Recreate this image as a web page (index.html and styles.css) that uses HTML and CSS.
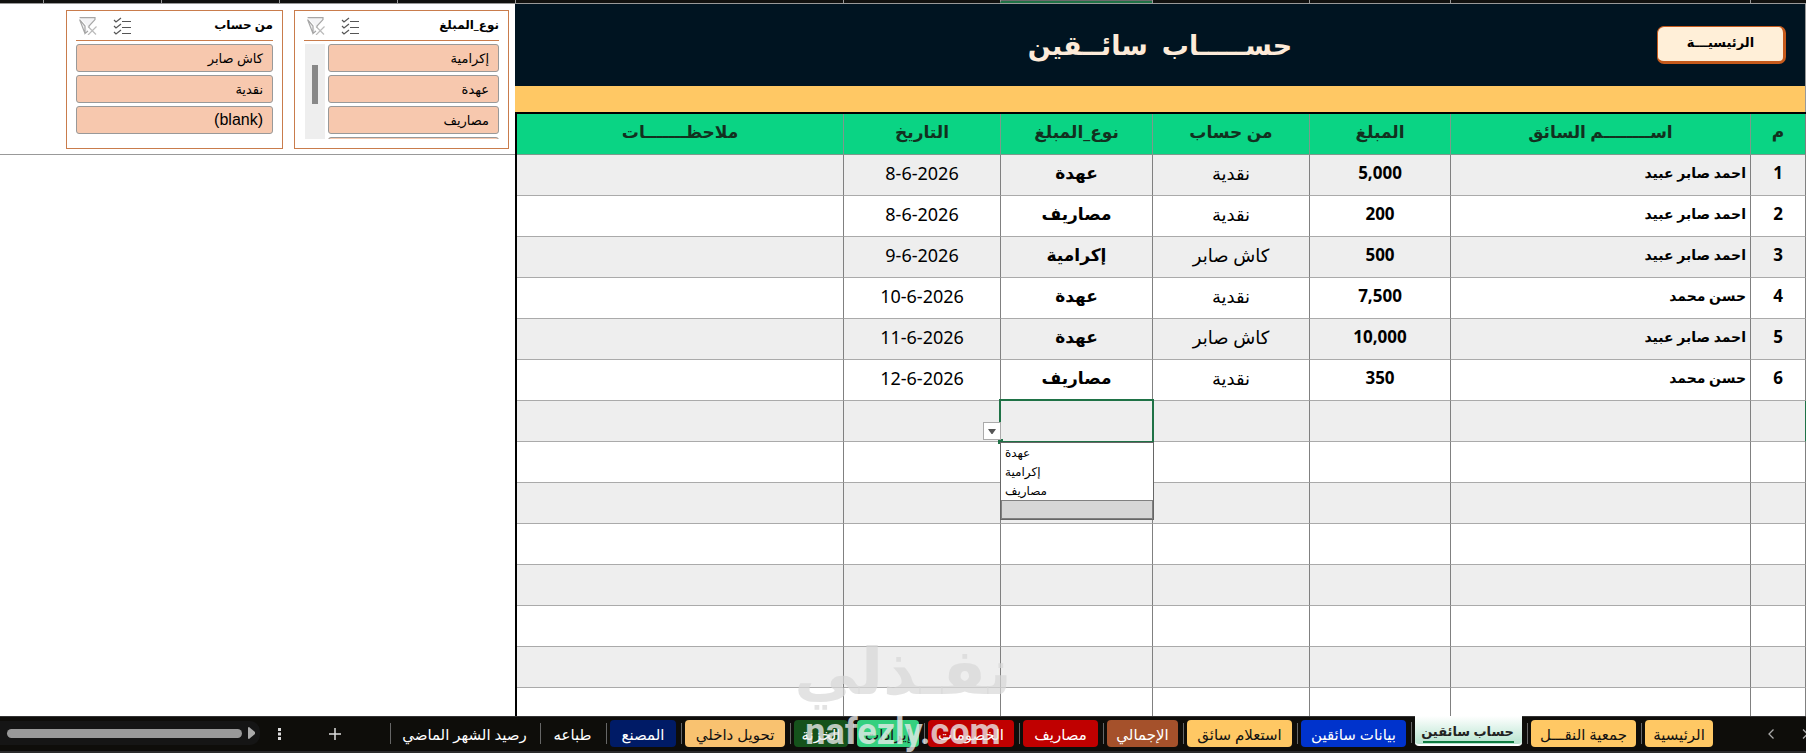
FILE: index.html
```html
<!DOCTYPE html>
<html lang="ar" dir="rtl">
<head>
<meta charset="utf-8">
<title>حساب سائقين</title>
<link rel="stylesheet" href="styles.css">
</head>
<body>
<div class="colhead" aria-hidden="true">
  <span class="c-no"></span><span class="c-name"></span><span class="c-amount"></span><span class="c-from"></span><span class="c-type current"></span><span class="c-date"></span><span class="c-notes"></span><span class="c-side"></span><span class="c-side"></span><span class="c-side"></span><span class="c-side"></span><span class="c-last"></span>
</div>
<main class="workspace">
  <section class="sheet">
    <header class="banner">
      <h1>حســـــاب&nbsp; سائــقين</h1>
      <button class="home" type="button">الرئيسيـــة</button>
    </header>
    <div class="stripe"></div>
    <table class="ledger">
      <colgroup><col class="c-no"><col class="c-name"><col class="c-amount"><col class="c-from"><col class="c-type"><col class="c-date"><col></colgroup>
      <thead>
        <tr><th>م</th><th>اســــــــم السائق</th><th>المبلغ</th><th>من حساب</th><th>نوع_المبلغ</th><th>التاريخ</th><th>ملاحظـــــــات</th></tr>
      </thead>
      <tbody>
        <tr><td>1</td><td class="name">احمد صابر عبيد</td><td>5,000</td><td>نقدية</td><td>عهدة</td><td>8-6-2026</td><td></td></tr>
        <tr><td>2</td><td class="name">احمد صابر عبيد</td><td>200</td><td>نقدية</td><td>مصاريف</td><td>8-6-2026</td><td></td></tr>
        <tr><td>3</td><td class="name">احمد صابر عبيد</td><td>500</td><td>كاش صابر</td><td>إكرامية</td><td>9-6-2026</td><td></td></tr>
        <tr><td>4</td><td class="name">حسن محمد</td><td>7,500</td><td>نقدية</td><td>عهدة</td><td>10-6-2026</td><td></td></tr>
        <tr><td>5</td><td class="name">احمد صابر عبيد</td><td>10,000</td><td>كاش صابر</td><td>عهدة</td><td>11-6-2026</td><td></td></tr>
        <tr><td>6</td><td class="name">حسن محمد</td><td>350</td><td>نقدية</td><td>مصاريف</td><td>12-6-2026</td><td></td></tr>
        <tr class="active-row"><td></td><td></td><td></td><td></td><td class="picker">
          <div class="cursor"></div>
          <button class="drop" type="button" aria-label="فتح القائمة"><svg viewBox="0 0 8 5" width="8" height="5"><path d="M0 0h8L4.500 5h-1z" fill="#555"/></svg></button>
          <ul class="options" role="listbox" aria-label="نوع المبلغ">
            <li role="option">عهدة</li><li role="option">إكرامية</li><li role="option">مصاريف</li><li role="option" class="hover" aria-selected="true"></li>
          </ul>
        </td><td></td><td></td></tr>
        <tr><td></td><td></td><td></td><td></td><td></td><td></td><td></td></tr>
        <tr><td></td><td></td><td></td><td></td><td></td><td></td><td></td></tr>
        <tr><td></td><td></td><td></td><td></td><td></td><td></td><td></td></tr>
        <tr><td></td><td></td><td></td><td></td><td></td><td></td><td></td></tr>
        <tr><td></td><td></td><td></td><td></td><td></td><td></td><td></td></tr>
        <tr><td></td><td></td><td></td><td></td><td></td><td></td><td></td></tr>
        <tr><td></td><td></td><td></td><td></td><td></td><td></td><td></td></tr>
      </tbody>
    </table>
  </section>
  <aside class="side">
    <div class="slicers">
      <section class="slicer">
        <header>
          <h2>نوع_المبلغ</h2>
          <button class="tool" type="button" aria-label="تحديد متعدد"><svg viewBox="0 0 18 18" width="18" height="18" fill="none" stroke="#555" stroke-width="1.200"><path d="M1 3l2 2 5-4M1 9l2 2 5-4M1 15l2 2 5-4M9 4.500h9M9 10.500h9M9 16.500h9"/></svg></button>
          <button class="tool" type="button" aria-label="مسح التصفية"><svg viewBox="0 0 18 18" width="18" height="18" fill="#f3f3f5" stroke="#a6a6a6" stroke-width="1.200"><path d="M0.600 0.600h15.400v2L10 9v2M6 16.500V9L0.600 2.600zM6 9v7.500l3-2.500"/><path d="M9 9.500l8 8M17.500 9.500l-8.500 8.500" stroke="#bbb"/></svg></button>
        </header>
        <div class="body">
          <div class="list"><button type="button">إكرامية</button><button type="button">عهدة</button><button type="button">مصاريف</button><button type="button" aria-label="فارغ"></button></div>
          <div class="scroll"><div class="thumb"></div></div>
        </div>
      </section>
      <section class="slicer">
        <header>
          <h2>من حساب</h2>
          <button class="tool" type="button" aria-label="تحديد متعدد"><svg viewBox="0 0 18 18" width="18" height="18" fill="none" stroke="#555" stroke-width="1.200"><path d="M1 3l2 2 5-4M1 9l2 2 5-4M1 15l2 2 5-4M9 4.500h9M9 10.500h9M9 16.500h9"/></svg></button>
          <button class="tool" type="button" aria-label="مسح التصفية"><svg viewBox="0 0 18 18" width="18" height="18" fill="#f3f3f5" stroke="#a6a6a6" stroke-width="1.200"><path d="M0.600 0.600h15.400v2L10 9v2M6 16.500V9L0.600 2.600zM6 9v7.500l3-2.500"/><path d="M9 9.500l8 8M17.500 9.500l-8.500 8.500" stroke="#bbb"/></svg></button>
        </header>
        <div class="body">
          <div class="list"><button type="button">كاش صابر</button><button type="button">نقدية</button><button type="button" dir="ltr" class="blank">(blank)</button></div>
        </div>
      </section>
    </div>
  </aside>
</main>
<footer class="bar">
  <div class="arrows">
    <button type="button" aria-label="التالي"><svg viewBox="0 0 6 10" width="6" height="10" fill="none" stroke="#aaa" stroke-width="1.300"><path d="M1 0.500L5.500 5 1 9.500"/></svg></button>
    <button type="button" aria-label="السابق"><svg viewBox="0 0 6 10" width="6" height="10" fill="none" stroke="#aaa" stroke-width="1.300"><path d="M5.500 0.500L1 5l4.500 4.500"/></svg></button>
  </div>
  <nav class="tabs">
    <a href="#" class="gold"><span>الرئيسية</span></a>
    <a href="#" class="gold"><span>جمعية النقـــل</span></a>
    <a href="#" class="selected" aria-current="page"><span>حساب سائقين</span></a>
    <a href="#" class="blue"><span>بيانات سائقين</span></a>
    <a href="#" class="gold"><span>استعلام سائق</span></a>
    <a href="#" class="brown"><span>الإجمالي</span></a>
    <a href="#" class="red"><span>مصاريف</span></a>
    <a href="#" class="red"><span>الخصومات</span></a>
    <a href="#" class="mint"><span>إيرادات</span></a>
    <a href="#" class="green"><span>الخزنة</span></a>
    <a href="#" class="sand"><span>تحويل داخلي</span></a>
    <a href="#" class="navy"><span>المصنع</span></a>
    <a href="#"><span>طباعه</span></a>
    <a href="#"><span>رصيد الشهر الماضي</span></a>
  </nav>
  <div class="tools">
    <button type="button" aria-label="ورقة جديدة"><svg viewBox="0 0 12 12" width="12" height="12" stroke="#ddd" stroke-width="1.500"><path d="M6 0v12M0 6h12"/></svg></button>
    <button type="button" aria-label="المزيد"><svg viewBox="0 0 3 12" width="3" height="12" fill="#ddd"><path d="M0 0h3v3H0zM0 4.500h3v3H0zM0 9h3v3H0z"/></svg></button>
  </div>
  <div class="hscroll"><svg viewBox="0 0 7 12" width="7" height="12"><path d="M0 0.500L1 0l6 5v2l-6 5-1-0.500z" fill="#aaa"/></svg><div class="hthumb"></div></div>
</footer>
<div class="mark" aria-hidden="true"><div class="mark-ar">نفـذلي</div><div class="mark-en" dir="ltr">nafezly.com</div></div>
</body>
</html>
```
FILE: styles.css
```css
* { box-sizing: border-box; }
body {
  margin: 0;
  height: 100vh;
  display: flex;
  flex-direction: column;
  overflow: hidden;
  position: relative;
  background: #fff;
  color: #000;
  font-family: "Noto Sans", "DejaVu Sans", sans-serif;
  font-size: 17px;
}
button { font: inherit; color: inherit; padding: 0; border: 0; background: none; }
svg { display: block; }

.c-no { width: 56px; }
.c-name { width: 300px; }
.c-amount { width: 141px; }
.c-from { width: 157px; }
.c-type { width: 152px; }
.c-date { width: 157px; }

.colhead { display: flex; flex: none; height: 4px; background: #11110f; border-bottom: 1px solid #999; }
.colhead span { flex: none; border-left: 1px solid #999; }
.colhead .c-notes { flex: 1; }
.colhead .c-side { width: 118px; }
.colhead .c-last { width: 43px; border: 0; }
.colhead .current { background: #6b6b6b; border-bottom: 2px solid #1f7246; }

.workspace { flex: 1; min-height: 0; display: flex; overflow: hidden; }
.sheet { flex: 1; }
.side { flex: none; width: 515px; }
.banner {
  height: 82px;
  display: grid;
  grid-template-columns: 1fr auto 1fr;
  align-items: center;
  background: #001421;
  border-right: 1px solid #999;
}
.banner h1 { grid-column: 2; grid-row: 1; margin: 0; font-size: 27px; line-height: 40px; font-weight: bold; color: #fdebd9; }
.home {
  grid-column: 1;
  grid-row: 1;
  justify-self: start;
  width: 129px;
  height: 38px;
  margin-right: 19px;
  padding-bottom: 4px;
  border: 1px solid #c55a1c;
  border-right-width: 3px;
  border-bottom-width: 3px;
  border-radius: 7px;
  background: #ffefd8;
  font-size: 13px;
  font-weight: bold;
}
.stripe { height: 26px; background: #ffc864; border-right: 1px solid #999; }

.ledger {
  width: 100%;
  table-layout: fixed;
  border-collapse: separate;
  border-spacing: 0;
  border: 0 solid #000;
  border-top-width: 2px;
  border-left-width: 2px;
}
.ledger th, .ledger td { padding: 0 0 4px; height: 41px; line-height: 24px; text-align: center; border-left: 1px solid #808080; border-bottom: 1px solid #aaa; }
.ledger th { background: #0ad484; color: #12301f; font-size: 17px; border-color: #7c9a8c; }
.ledger th:first-child, .ledger td:first-child { border-right: 1px solid #808080; }
.ledger th:last-child, .ledger td:last-child { border-left: 0; }
.ledger tbody tr:nth-child(odd) { background: #eee; }
.ledger td:nth-child(1), .ledger td:nth-child(3), .ledger td:nth-child(5) { font-weight: bold; }
.ledger td:nth-child(4), .ledger td:nth-child(6) { font-size: 18px; }
.ledger .name { text-align: right; padding-right: 4px; font-size: 14px; font-weight: bold; }
.ledger .active-row td:first-child { border-right-color: #1f7246; }

.picker { position: relative; }
.cursor { position: absolute; inset: -2px -2px -2px -2px; border: 2px solid #1f7246; }
.cursor::after { content: ""; position: absolute; left: -3px; bottom: -3px; width: 5px; height: 5px; background: #1f7246; }
.drop { position: absolute; right: 100%; bottom: 1px; width: 18px; height: 18px; display: grid; place-items: center; background: #fff; border: 1px solid #aaa; }
.ledger .options {
  position: absolute;
  z-index: 1;
  top: 100%;
  left: -1px;
  right: -2px;
  margin: 1px 0 0;
  padding: 0;
  list-style: none;
  background: #fff;
  border: 1px solid #666;
  font-size: 12px;
  font-weight: normal;
  text-align: left;
}
.options li { height: 19px; line-height: 19px; padding-left: 4px; }
.options .hover { background: #d6d6d6; border: 1px solid #808080; }

.slicers { display: flex; gap: 11px; height: 151px; padding: 6px 6px 0 0; border-bottom: 1px solid #999; align-items: flex-start; }
.slicer { width: 215px; height: 139px; padding: 0 9px; border: 1px solid #c97c4c; background: #fff; }
.slicer + .slicer { width: 217px; }
.slicer header { display: flex; align-items: center; gap: 16px; height: 30px; padding-left: 3px; border-bottom: 1px solid #c97c4c; }
.slicer h2 { flex: 1; margin: 0; font-size: 12px; line-height: 20px; padding-bottom: 2px; font-weight: bold; }
.body { display: flex; gap: 3px; height: 95px; margin-top: 3px; overflow: hidden; }
.list { flex: 1; display: flex; flex-direction: column; gap: 3px; }
.list button { flex: none; height: 28px; padding: 0 9px; text-align: right; font-size: 13px; background: #f7c8ae; border: 1px solid #999; border-radius: 3px; }
.list .blank { font-family: "Liberation Sans", sans-serif; font-size: 16px; }
.scroll { width: 20px; margin-left: 1px; padding-top: 21px; background: #eee; }
.thumb { width: 6px; height: 39px; margin: 0 auto; background: #888; }

.bar { flex: none; height: 37px; display: flex; background: #0e0d0a; border-top: 1px solid #333; box-shadow: inset 0 -2px #2b2b2b; }
.arrows { flex: 1; display: flex; align-items: center; justify-content: flex-start; gap: 30px; padding-bottom: 3px; }
.arrows button { height: 10px; margin-right: -2px; }
.tabs { display: grid; grid-template-columns: 77px 114px 116px 114px 114px 80px 84px 95px 71px 63px 109px 75px 66px 150px; }
.tabs a { position: relative; height: 30px; padding: 3px 0 0 9px; color: #fff; font-size: 15px; line-height: 29px; text-align: center; text-decoration: none; white-space: nowrap; }
.tabs a::after { content: ""; position: absolute; left: 5px; top: 6px; height: 21px; border-left: 1px solid #666; }
.tabs span { display: block; height: 27px; border-radius: 4px; }
.gold span { background: #ffc864; color: #111; }
.sand span { background: #f9c270; color: #111; }
.blue span { background: #0033cc; }
.brown span { background: #a5512b; }
.red span { background: #c00000; }
.mint span { background: #34d07f; color: #111; }
.green span { background: #15521b; }
.navy span { background: #001b66; }
.tabs .selected { padding-top: 0; margin-top: -1px; font-weight: bold; font-size: 13px; }
.selected span { height: 30px; padding: 0 8px; color: #222; border-radius: 0 0 4px 4px; background: linear-gradient(#fff, #b4e3cd); border-bottom: 1px solid #fff; box-shadow: inset 0 -1px #fff; line-height: 30px; }
.selected span::after { content: ""; display: block; height: 2px; margin-top: -5px; background: #107c41; }
.tools { flex: none; width: 125px; display: flex; align-items: center; gap: 48px; padding: 0 44px 3px 0; }
.hscroll { flex: none; width: 260px; height: 24px; margin-top: 4px; display: flex; align-items: center; gap: 6px; padding: 0 5px 0 7px; background: #151515; border-radius: 0 10px 10px 0; }
.hthumb { flex: 1; height: 9px; border-radius: 5px; background: #999; }

.mark { position: absolute; left: 0; right: 0; bottom: 0; height: 124px; text-align: center; pointer-events: none; font-weight: bold; }
.mark-ar { font-size: 64px; line-height: 82px; color: rgba(215, 215, 215, 0.7); }
.mark-en { font-family: Roboto, sans-serif; font-size: 36px; line-height: 42px; color: rgba(235, 235, 235, 0.8); }
```
